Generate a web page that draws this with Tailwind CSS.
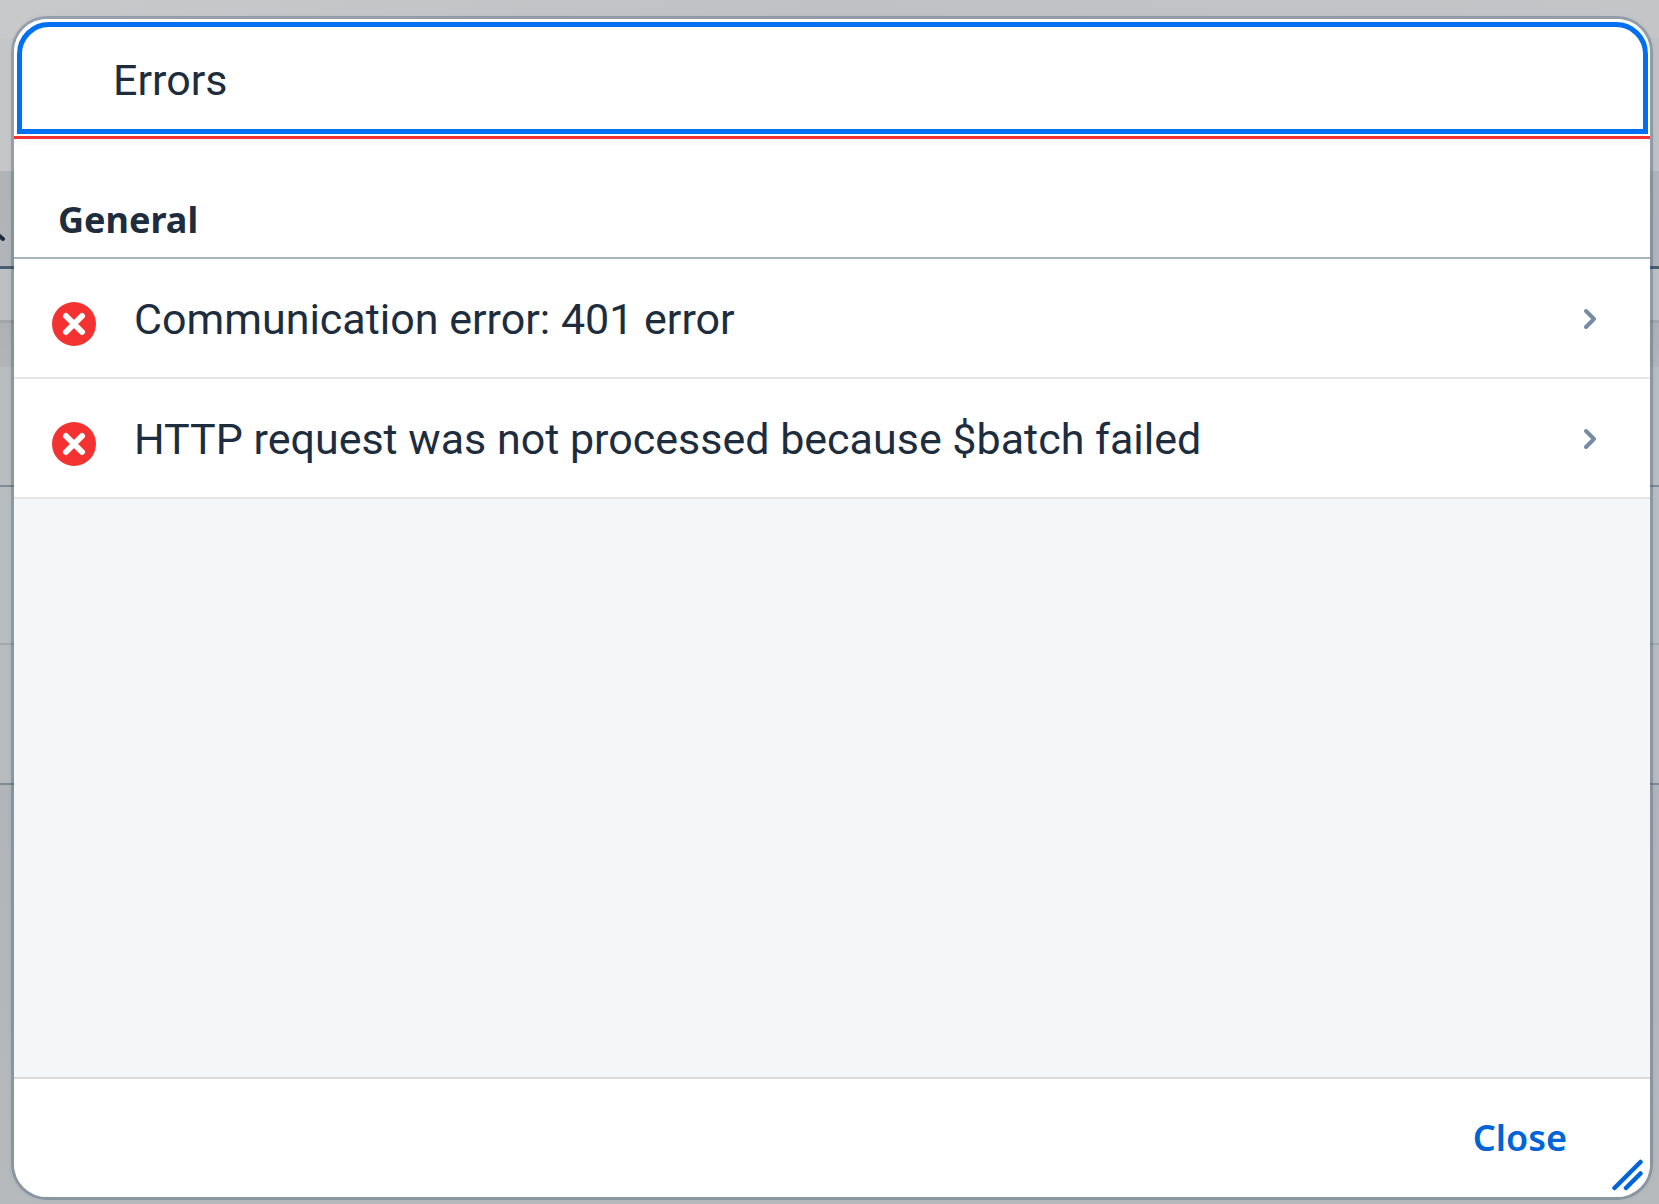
<!DOCTYPE html>
<html lang="en">
<head>
<meta charset="utf-8">
<meta name="viewport" content="width=device-width, initial-scale=1">
<title>Errors</title>
<script src="https://cdn.jsdelivr.net/npm/@tailwindcss/browser@4"></script>
</head>
<body class="relative min-h-screen bg-[#b8bcbf] font-['Roboto',sans-serif] text-[#1d2d3e]">
  <!-- Dimmed page behind the dialog -->
  <div class="absolute inset-0 flex flex-col overflow-hidden" aria-hidden="true">
    <div class="h-[38px] shrink-0 bg-linear-to-r from-[#c8c9ca] via-[#c0c1c4] to-[#c4c5c7]"></div>
    <div class="h-[133px] shrink-0 bg-linear-to-r from-[#c5c6c7] to-[#bfc1c4]"></div>
    <div class="flex h-[98px] shrink-0 items-end border-b-3 border-[#475e75] bg-linear-to-b from-[#b0b4b7] to-[#b1b5ba] pb-6">
      <svg class="h-9 w-[5px]" viewBox="0 0 5 36" fill="none" stroke="#1d2d3e" stroke-width="4" stroke-linecap="round"><path d="M-6 25L3 33"/></svg>
    </div>
    <div class="h-[54px] shrink-0 border-b-3 border-[#a2a6a9] bg-[#bcc0c3]"></div>
    <div class="h-11 shrink-0 bg-linear-to-b from-[#adb1b3] to-[#b1b5b7]"></div>
    <div class="h-[120px] shrink-0 border-b-2 border-[#7f8a96] bg-[#b8bdbf]"></div>
    <div class="h-[158px] shrink-0 border-b-2 border-[#a4a9ac] bg-[#b8bdc0]"></div>
    <div class="h-[140px] shrink-0 border-b-2 border-[#7f8a96] bg-[#b7bbbd]"></div>
    <div class="flex-1 bg-linear-to-b from-[#b1b5b9] to-[#b6babc]"></div>
  </div>

  <div class="relative flex min-h-screen flex-col pt-4 pr-1.5 pb-1 pl-[11px]">
    <section role="dialog" aria-labelledby="title" class="relative flex flex-1 flex-col overflow-hidden rounded-[36px] border-3 border-[#29476b]/30 bg-[#f5f6f8] bg-clip-padding shadow-[0_0_4px_rgba(34,53,72,0.05)]">
      <header class="relative z-10 border-b-3 border-[#f53232] bg-white pt-[3px] pr-[2px] pb-[2px] pl-[3px] shadow-[0_4px_6px_rgba(34,53,72,0.05)]">
        <div tabindex="0" class="flex h-28 items-center rounded-t-[32px] border-5 border-[#0070f2] px-[91px] pt-1 outline-none">
          <h1 id="title" class="text-[43px] leading-[48px]">Errors</h1>
        </div>
      </header>

      <h2 class="border-b-2 border-[#a8b3bf] bg-white px-11 pt-[58px] pb-3.5 font-['Noto_Sans',sans-serif] text-[36px] leading-[46px] font-bold">General</h2>
      <ul>
        <li class="border-b-2 border-[#e5e5e5] bg-white">
          <button type="button" class="flex h-[118px] w-full items-center pt-px pr-[51px] pl-[38px] text-left">
            <svg class="mt-[11px] mr-[38px] size-11 shrink-0" viewBox="0 0 44 44" aria-hidden="true"><circle cx="22" cy="22" r="22" fill="#f53232"/><path d="M14 14L30 30M30 14L14 30" stroke="#fff" stroke-width="6" stroke-linecap="round"/></svg>
            <span class="flex-1 text-[43px] leading-[48px]">Communication error: 401 error</span>
            <svg class="h-6 w-4 shrink-0" viewBox="0 0 16 24" fill="none" stroke="#758ca4" stroke-width="4" stroke-linecap="round" stroke-linejoin="round" aria-hidden="true"><path d="M3 4L11 12L3 20"/></svg>
          </button>
        </li>
        <li class="border-b-2 border-[#e5e5e5] bg-white">
          <button type="button" class="flex h-[118px] w-full items-center pt-px pr-[51px] pl-[38px] text-left">
            <svg class="mt-[11px] mr-[38px] size-11 shrink-0" viewBox="0 0 44 44" aria-hidden="true"><circle cx="22" cy="22" r="22" fill="#f53232"/><path d="M14 14L30 30M30 14L14 30" stroke="#fff" stroke-width="6" stroke-linecap="round"/></svg>
            <span class="flex-1 text-[43px] leading-[48px]">HTTP request was not processed because $batch failed</span>
            <svg class="h-6 w-4 shrink-0" viewBox="0 0 16 24" fill="none" stroke="#758ca4" stroke-width="4" stroke-linecap="round" stroke-linejoin="round" aria-hidden="true"><path d="M3 4L11 12L3 20"/></svg>
          </button>
        </li>
      </ul>

      <footer class="mt-auto flex h-[120px] items-center justify-end border-t-2 border-[#d9d9d9] bg-white pr-[83px]">
        <button type="button" class="font-['Noto_Sans',sans-serif] text-[36px] leading-[46px] font-semibold text-[#0064d9]">Close</button>
      </footer>
      <svg class="absolute right-1.5 bottom-1.5 size-8" viewBox="0 0 32 32" fill="none" stroke="#0064d9" stroke-width="4.5" stroke-linecap="round" aria-hidden="true"><path d="M2.500 29L28.500 3M14 29L28.500 14.500"/></svg>
    </section>
  </div>
</body>
</html>
